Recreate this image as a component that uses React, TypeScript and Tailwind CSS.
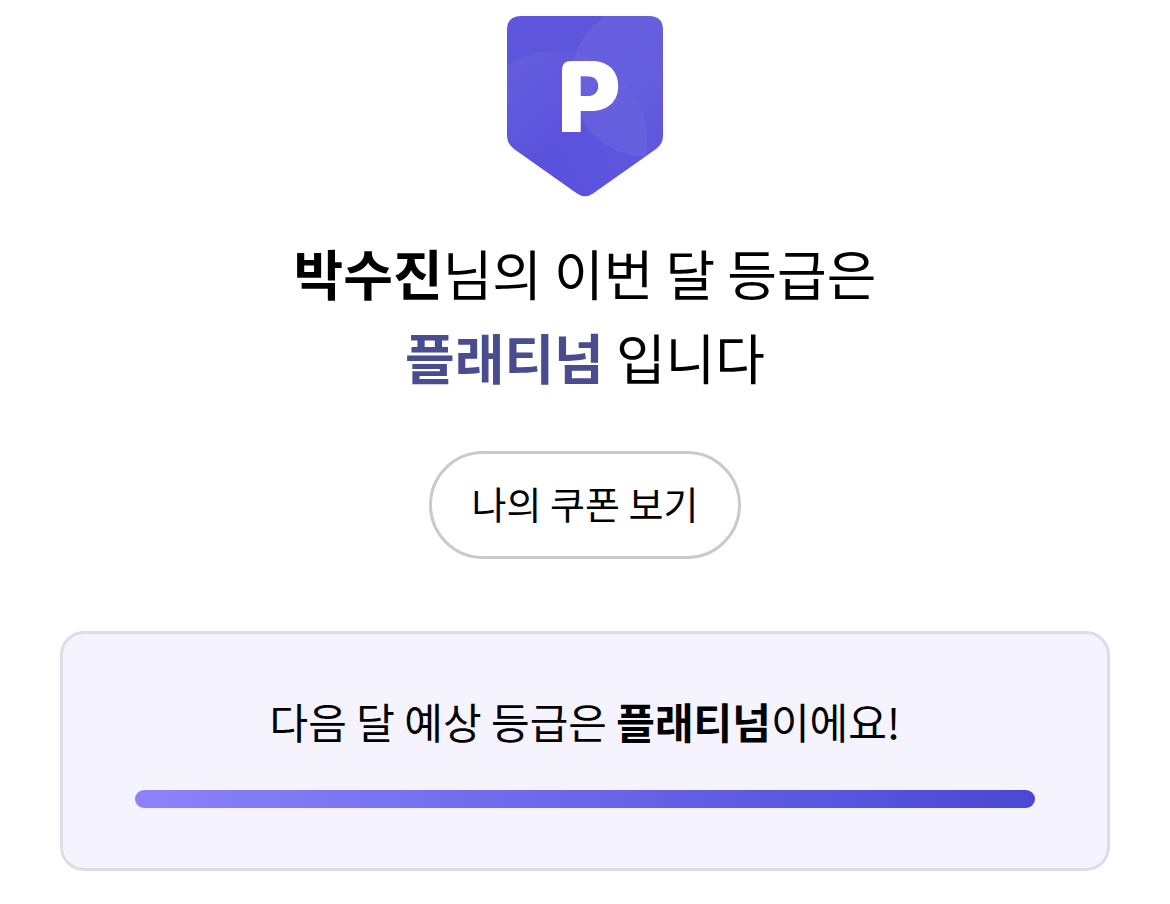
function GradeBadge() {
  return (
    <svg
      viewBox="0 0 156 181"
      className="w-[156px] h-[181px]"
      role="img"
      aria-label="플래티넘 등급"
    >
      <defs>
        <linearGradient id="badge-fill" x1="0.2" y1="0" x2="0.5" y2="1">
          <stop offset="0" stopColor="#5f56dd" />
          <stop offset="0.55" stopColor="#5b53dc" />
          <stop offset="1" stopColor="#524adb" />
        </linearGradient>
        <linearGradient id="circle-fill" x1="0" y1="0" x2="1" y2="1">
          <stop offset="0" stopColor="#fff" stopOpacity="0.06" />
          <stop offset="0.5" stopColor="#fff" stopOpacity="0.01" />
          <stop offset="1" stopColor="#fff" stopOpacity="0.09" />
        </linearGradient>
        <clipPath id="badge-shape">
          <path d="M14 0H142Q156 0 156 14V120Q156 128 149 133L86 177.500Q78 183 70 177.500L7 133Q0 128 0 120V14Q0 0 14 0Z" />
        </clipPath>
        {/* softens the top-left corner of the letter */}
        <clipPath id="letter-corner">
          <path d="M55 54Q55 45 64 45H120V120H55Z" />
        </clipPath>
      </defs>
      <g clipPath="url(#badge-shape)">
        <rect width="156" height="181" fill="url(#badge-fill)" />
        <circle cx="141" cy="64" r="77" fill="#fff" fillOpacity="0.06" />
        <circle cx="50" cy="125" r="90" fill="url(#circle-fill)" />
      </g>
      <text
        x="50"
        y="116"
        fill="#fff"
        fontSize="97"
        fontWeight="900"
        fontFamily="Inter, sans-serif"
        clipPath="url(#letter-corner)"
      >
        P
      </text>
    </svg>
  );
}

export default function App() {
  return (
    <main className="flex flex-col items-center bg-white px-15 pt-4 pb-8 text-black font-['Noto_Sans_CJK_KR',sans-serif]">
      <GradeBadge />

      <h1 className="mt-[34px] text-center text-[54px] leading-[84px] font-normal">
        <strong className="font-bold">박수진</strong>님의 이번 달 등급은
        <br />
        <strong className="font-bold text-[#494c8e]">플래티넘</strong> 입니다
      </h1>

      <button
        type="button"
        className="mt-13 h-27 px-10 pb-1 rounded-full border-3 border-[#cacaca] bg-white text-[38px] leading-none"
      >
        나의 쿠폰 보기
      </button>

      {/* 다음 달 예상 등급 */}
      <section className="mt-18 w-full rounded-3xl border-3 border-[#dddde8] bg-[#f5f3fe] px-18 pt-14 pb-15">
        <p className="text-center text-[42px] leading-[62px]">
          다음 달 예상 등급은 <strong className="font-bold">플래티넘</strong>
          이에요!
        </p>
        <div
          role="progressbar"
          aria-label="다음 달 예상 등급"
          aria-valuenow={100}
          className="mt-[38px] h-[18px] rounded-full bg-linear-to-r from-[#8b83fb] to-[#4b47d6]"
        />
      </section>
    </main>
  );
}
